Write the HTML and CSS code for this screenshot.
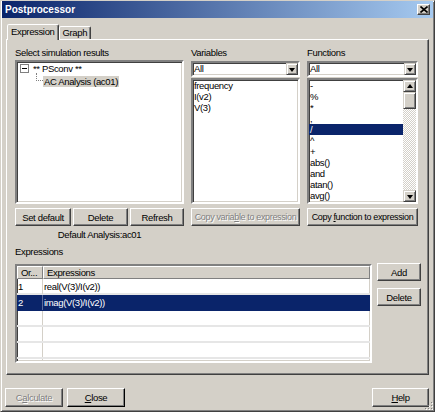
FILE: index.html
```html
<!DOCTYPE html>
<html>
<head>
<meta charset="utf-8">
<title>Postprocessor</title>
<link rel="stylesheet" href="styles.css">
</head>
<body>
<div class="window">
  <div class="titlebar">
    <span class="title">Postprocessor</span>
    <div class="tb-close">
      <svg width="8" height="7" viewBox="0 0 8 7"><path d="M0.5 0.5 L7.5 6.5 M7.5 0.5 L0.5 6.5" stroke="#000" stroke-width="1.6"/></svg>
    </div>
  </div>
  <div class="client">
    <div class="tabs">
      <div class="tab active">Expression</div>
      <div class="tab">Graph</div>
    </div>
    <div class="panel">
      <div class="top">
        <div class="col">
          <div class="label">Select simulation results</div>
          <div class="tree sunken">
            <div class="node root">
              <span class="expander"><span class="minus"></span></span>
              <span class="ntext">** PSconv **</span>
            </div>
            <div class="node child">
              <span class="connector"></span>
              <span class="ntext selected-gray">AC Analysis (ac01)</span>
            </div>
          </div>
          <div class="btnrow">
            <button class="btn">Set default</button>
            <button class="btn">Delete</button>
            <button class="btn">Refresh</button>
          </div>
          <div class="default-analysis">Default Analysis:ac01</div>
        </div>
        <div class="col">
          <div class="label">Variables</div>
          <div class="combo sunken">
            <span class="combo-text">All</span>
            <span class="combo-btn"><span class="tri-down"></span></span>
          </div>
          <div class="list sunken">
            <div class="items">
              <div class="item">frequency</div>
              <div class="item">I(v2)</div>
              <div class="item">V(3)</div>
            </div>
          </div>
          <button class="btn wide disabled">Copy varia<u>b</u>le to expression</button>
        </div>
        <div class="col">
          <div class="label">Functions</div>
          <div class="combo sunken">
            <span class="combo-text">All</span>
            <span class="combo-btn"><span class="tri-down"></span></span>
          </div>
          <div class="list sunken">
            <div class="items">
              <div class="item">-</div>
              <div class="item">%</div>
              <div class="item">*</div>
              <div class="item">,</div>
              <div class="item sel">/</div>
              <div class="item">^</div>
              <div class="item">+</div>
              <div class="item">abs()</div>
              <div class="item">and</div>
              <div class="item">atan()</div>
              <div class="item">avg()</div>
              <div class="item">avgx()</div>
            </div>
            <div class="scrollbar">
              <span class="sb-btn"><span class="tri-up"></span></span>
              <span class="sb-thumb"></span>
              <span class="sb-track"></span>
              <span class="sb-btn"><span class="tri-down"></span></span>
            </div>
          </div>
          <button class="btn wide">Copy <u>f</u>unction to expression</button>
        </div>
      </div>
      <div class="label exprlabel">Expressions</div>
      <div class="exprs">
        <div class="table sunken">
          <div class="tr head">
            <div class="th">Or...</div>
            <div class="th">Expressions</div>
          </div>
          <div class="tr"><div class="td num">1</div><div class="td">real(V(3)/I(v2))</div></div>
          <div class="tr sel"><div class="td num">2</div><div class="td">imag(V(3)/I(v2))</div></div>
          <div class="tr"><div class="td num"></div><div class="td"></div></div>
          <div class="tr"><div class="td num"></div><div class="td"></div></div>
          <div class="tr"><div class="td num"></div><div class="td"></div></div>
          <div class="tr"><div class="td num"></div><div class="td"></div></div>
        </div>
        <div class="side-btns">
          <button class="btn side">Add</button>
          <button class="btn side">Delete</button>
        </div>
      </div>
    </div>
    <div class="footer">
      <button class="btn foot disabled">C<u>a</u>lculate</button>
      <button class="btn foot default"><u>C</u>lose</button>
      <button class="btn foot help"><u>H</u>elp</button>
    </div>
  </div>
  <svg class="grip" width="10" height="10" viewBox="0 0 10 10">
    <g fill="#808080">
      <rect x="8" y="2" width="1" height="1"/><rect x="8" y="5" width="1" height="1"/><rect x="8" y="8" width="1" height="1"/>
      <rect x="5" y="5" width="1" height="1"/><rect x="5" y="8" width="1" height="1"/><rect x="2" y="8" width="1" height="1"/>
    </g>
    <g fill="#fff">
      <rect x="9" y="3" width="1" height="1"/><rect x="9" y="6" width="1" height="1"/><rect x="9" y="9" width="1" height="1"/>
      <rect x="6" y="6" width="1" height="1"/><rect x="6" y="9" width="1" height="1"/><rect x="3" y="9" width="1" height="1"/>
    </g>
  </svg>
</div>
</body>
</html>
```
FILE: styles.css
```css
* { box-sizing: border-box; }
html, body { margin: 0; padding: 0; background: #d4d0c8; }
body {
  font-family: "Liberation Sans", Arial, sans-serif;
  font-size: 9.5px;
  letter-spacing: -0.35px;
  color: #000;
}
.window {
  position: relative;
  width: 435px;
  height: 412px;
  background: #d4d0c8;
  border: 1px solid;
  border-color: #d4d0c8 #404040 #404040 #d4d0c8;
  box-shadow: inset 1px 1px #fff, inset -1px -1px #808080;
  padding: 0 1px 1px 1px;
  display: flex;
  flex-direction: column;
}
.titlebar {
  height: 17px;
  flex: none;
  background: linear-gradient(to right, #0a246a, #a6caf0);
  display: flex;
  align-items: center;
  padding: 0 3px 0 3px;
}
.title {
  color: #fff;
  font-weight: bold;
  font-size: 10px;
  letter-spacing: 0;
  flex: 1;
}
.tb-close {
  width: 13px;
  height: 11px;
  background: #d4d0c8;
  border: 1px solid;
  border-color: #fff #404040 #404040 #fff;
  box-shadow: inset -1px -1px #808080;
  display: flex;
  align-items: center;
  justify-content: center;
  padding-bottom: 1px;
}
.tb-close svg { display: block; }
.client {
  flex: 1;
  padding: 6px 4px 0 3px;
  display: flex;
  flex-direction: column;
}
.tabs {
  display: flex;
  align-items: flex-end;
  height: 15px;
  margin-left: 2px;
  position: relative;
  z-index: 1;
}
.tab {
  height: 13px;
  padding: 0 3px;
  line-height: 12px;
  border: 1px solid;
  border-bottom: none;
  border-color: #fff #404040 transparent #fff;
  box-shadow: inset -1px 0 #808080;
  border-radius: 2px 2px 0 0;
  background: #d4d0c8;
}
.tab.active {
  height: 16px;
  margin-bottom: -1px;
  line-height: 13px;
}
.panel {
  height: 336px;
  flex: none;
  margin-left: 1px;
  border: 1px solid;
  border-color: #fff #404040 #404040 #fff;
  box-shadow: inset -1px -1px #808080;
  padding: 6px 6px 0 8px;
}
.top {
  display: grid;
  grid-template-columns: 169px 109px 111px;
  column-gap: 7px;
  align-items: start;
}
.col { display: flex; flex-direction: column; }
.label { height: 14px; line-height: 14px; white-space: nowrap; }
.sunken {
  border: 2px solid;
  border-color: #808080 #fff #fff #808080;
  box-shadow: inset 1px 1px #404040, inset -1px -1px #d4d0c8;
  background: #fff;
}
.tree {
  height: 144px;
  padding: 0 0 0 3px;
}
.node {
  height: 13px;
  display: flex;
  align-items: center;
  white-space: nowrap;
}
.expander {
  width: 9px;
  height: 9px;
  border: 1px solid #808080;
  background: #fff;
  display: flex;
  align-items: center;
  justify-content: center;
  margin-right: 4px;
}
.minus { width: 5px; height: 1px; background: #000; }
.connector {
  align-self: flex-start;
  margin-top: -2px;
  margin-left: 16px;
  width: 7px;
  height: 8px;
  border-left: 1px dotted #808080;
  border-bottom: 1px dotted #808080;
}
.selected-gray {
  background: #d4d0c8;
  padding: 0 1px;
  line-height: 11px;
}
.btn {
  font: inherit;
  letter-spacing: inherit;
  color: #000;
  background: #d4d0c8;
  border: 1px solid;
  border-color: #fff #404040 #404040 #fff;
  box-shadow: inset -1px -1px #808080;
  padding: 0;
  margin: 0;
  height: 18px;
  white-space: nowrap;
}
.btn.disabled { color: #808080; text-shadow: 1px 1px #fff; }
.btnrow {
  margin-top: 4px;
  display: grid;
  grid-template-columns: 56px 55px 54px;
  column-gap: 2px;
}
.default-analysis {
  margin-top: 3px;
  height: 12px;
  line-height: 12px;
  text-align: center;
}
.combo {
  margin-top: 1px;
  height: 16px;
  display: flex;
  align-items: center;
  padding: 0 0 0 1px;
}
.combo-text { flex: 1; line-height: 12px; }
.combo-btn {
  width: 12px;
  height: 12px;
  background: #d4d0c8;
  border: 1px solid;
  border-color: #d4d0c8 #404040 #404040 #d4d0c8;
  box-shadow: inset 1px 1px #fff, inset -1px -1px #808080;
  display: flex;
  align-items: center;
  justify-content: center;
}
.tri-down {
  width: 0; height: 0;
  border-left: 3.5px solid transparent;
  border-right: 3.5px solid transparent;
  border-top: 4px solid #000;
  margin-top: 1px;
}
.tri-up {
  width: 0; height: 0;
  border-left: 3.5px solid transparent;
  border-right: 3.5px solid transparent;
  border-bottom: 4px solid #000;
}
.list {
  margin-top: 1px;
  height: 126px;
  display: flex;
  overflow: hidden;
}
.items { flex: 1; overflow: hidden; padding-left: 1px; }
.item {
  height: 11px;
  line-height: 11px;
  white-space: nowrap;
}
.item.sel { background: #0a246a; color: #fff; margin-left: -1px; padding-left: 1px; }
.scrollbar {
  width: 13px;
  flex: none;
  display: flex;
  flex-direction: column;
  background-color: #eeede9;
  background-image: conic-gradient(#fff 25%, #d4d0c8 0 50%, #fff 0 75%, #d4d0c8 0);
  background-size: 2px 2px;
}
.sb-btn, .sb-thumb {
  flex: none;
  height: 12px;
  background: #d4d0c8;
  border: 1px solid;
  border-color: #d4d0c8 #404040 #404040 #d4d0c8;
  box-shadow: inset 1px 1px #fff, inset -1px -1px #808080;
  display: flex;
  align-items: center;
  justify-content: center;
}
.sb-thumb { height: 17px; }
.sb-track { flex: 1; }
.btn.wide { margin-top: 4px; width: 100%; font-size: 9px; letter-spacing: -0.35px; }
.exprlabel { margin-top: 5px; height: 12px; line-height: 12px; }
.exprs {
  margin-top: 5px;
  display: flex;
  gap: 5px;
  align-items: flex-start;
}
.table {
  margin-top: 1px;
  width: 357px;
  height: 99px;
  overflow: hidden;
}
.tr {
  display: grid;
  grid-template-columns: 26px 1fr;
  height: 16px;
  border-bottom: 2px solid #e6e6e6;
}
.tr.head { height: 13px; border-bottom: none; }
.th {
  background: #d4d0c8;
  border: 1px solid;
  border-color: #fff #808080 #808080 #fff;
  line-height: 11px;
  padding-left: 3px;
  white-space: nowrap;
}
.td {
  line-height: 15px;
  padding-left: 1px;
  white-space: nowrap;
}
.td.num { border-right: 1px solid #d4d0c8; }
.tr.sel { background: #0a246a; color: #fff; border-bottom-color: #0a246a; }
.tr.sel .td.num { border-right-color: #5a6a9a; }
.side-btns {
  display: flex;
  flex-direction: column;
  gap: 7px;
}
.btn.side { width: 44px; height: 18px; }
.footer {
  margin-top: 13px;
  display: flex;
  align-items: center;
}
.btn.foot { width: 58px; height: 19px; }
.btn.default { margin-left: 4px; border-color: #fff #000 #000 #fff; box-shadow: inset -1px -1px #808080; }
.btn.help { margin-left: auto; width: 57px; }
.grip { position: absolute; right: 1px; bottom: 1px; }
```
